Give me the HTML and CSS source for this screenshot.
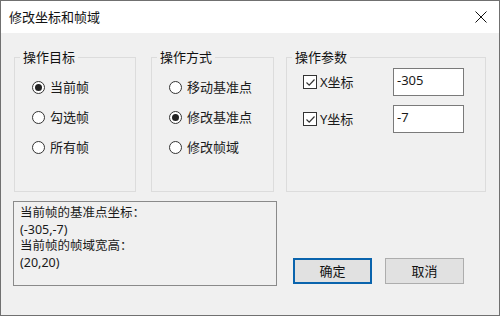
FILE: index.html
```html
<!DOCTYPE html>
<html lang="zh-CN">
<head>
<meta charset="utf-8">
<title>修改坐标和帧域</title>
<link rel="stylesheet" href="styles.css">
</head>
<body>
<div class="window">
  <div class="titlebar">
    <span class="title">修改坐标和帧域</span>
    <svg class="close" width="12" height="12" viewBox="0 0 12 12"><path d="M0.5 0.5 L11.5 11.5 M11.5 0.5 L0.5 11.5" stroke="#111" stroke-width="1" fill="none"/></svg>
  </div>
  <div class="content">
    <div class="groups">
      <fieldset class="group g1">
        <legend>操作目标</legend>
        <div class="rows">
          <div class="row"><span class="radio on"></span><span>当前帧</span></div>
          <div class="row"><span class="radio"></span><span>勾选帧</span></div>
          <div class="row"><span class="radio"></span><span>所有帧</span></div>
        </div>
      </fieldset>
      <fieldset class="group g2">
        <legend>操作方式</legend>
        <div class="rows">
          <div class="row"><span class="radio"></span><span>移动基准点</span></div>
          <div class="row"><span class="radio on"></span><span>修改基准点</span></div>
          <div class="row"><span class="radio"></span><span>修改帧域</span></div>
        </div>
      </fieldset>
      <fieldset class="group g3">
        <legend>操作参数</legend>
        <div class="params">
          <div class="param">
            <span class="check"><svg width="11" height="11" viewBox="0 0 11 11"><path d="M1.5 5.5 L4.2 8.2 L9.5 2.5" stroke="#333" stroke-width="1.2" fill="none"/></svg></span>
            <span class="plabel">X坐标</span>
            <div class="edit">-305</div>
          </div>
          <div class="param">
            <span class="check"><svg width="11" height="11" viewBox="0 0 11 11"><path d="M1.5 5.5 L4.2 8.2 L9.5 2.5" stroke="#333" stroke-width="1.2" fill="none"/></svg></span>
            <span class="plabel">Y坐标</span>
            <div class="edit">-7</div>
          </div>
        </div>
      </fieldset>
    </div>
    <div class="lower">
      <div class="info">
        <div class="line">当前帧的基准点坐标：</div>
        <div class="line">(-305,-7)</div>
        <div class="line">当前帧的帧域宽高：</div>
        <div class="line">(20,20)</div>
      </div>
      <div class="buttons">
        <button class="btn default">确定</button>
        <button class="btn">取消</button>
      </div>
    </div>
  </div>
</div>
</body>
</html>
```
FILE: styles.css
```css
* { box-sizing: border-box; }
html, body { margin: 0; padding: 0; }
body {
  width: 500px;
  height: 316px;
  font-family: "Noto Sans", "Noto Sans CJK SC", sans-serif;
  font-size: 13px;
  color: #1a1a1a;
  background: #f0f0f0;
}
.window {
  width: 500px;
  height: 316px;
  border: 1px solid #707070;
  display: flex;
  flex-direction: column;
  background: #f0f0f0;
}
.titlebar {
  height: 32px;
  background: #fff;
  display: flex;
  align-items: center;
  justify-content: space-between;
  padding: 0 12px 0 8px;
  flex-shrink: 0;
}
.title { font-size: 13px; line-height: 16px; color: #111; }
.close { display: block; }
.content {
  flex: 1;
  display: flex;
  flex-direction: column;
  padding: 16px 0 0 12px;
}
.groups {
  display: flex;
  padding-left: 1px;
}
.group {
  margin: 0;
  border: 1px solid #dcdcdc;
  padding: 0 0 0 5px;
  height: 143px;
  min-width: 0;
}
.group legend {
  padding: 0 3px;
  line-height: 16px;
  font-size: 13px;
  color: #111;
}
.g1 { width: 122px; margin-right: 15px; }
.g2 { width: 123px; margin-right: 12px; }
.g3 { width: 200px; }
.rows {
  display: flex;
  flex-direction: column;
  padding: 7px 0 0 12px;
}
.row {
  height: 30px;
  display: flex;
  align-items: center;
  gap: 5px;
  line-height: 16px;
}
.radio {
  width: 13px;
  height: 13px;
  border: 1px solid #333;
  border-radius: 50%;
  background: #fff;
  display: flex;
  align-items: center;
  justify-content: center;
  flex-shrink: 0;
}
.radio.on::after {
  content: "";
  width: 7px;
  height: 7px;
  border-radius: 50%;
  background: #222;
}
.params {
  display: flex;
  flex-direction: column;
  gap: 9px;
  padding: 3px 0 0 11px;
}
.param {
  display: flex;
  align-items: center;
  height: 28px;
}
.check {
  width: 14px;
  height: 14px;
  border: 1px solid #333;
  background: #fff;
  display: flex;
  align-items: center;
  justify-content: center;
  flex-shrink: 0;
}
.check svg { display: block; }
.plabel {
  width: 76px;
  padding-left: 3px;
  line-height: 16px;
}
.edit {
  width: 71px;
  height: 28px;
  border: 1px solid #7a7a7a;
  background: #fff;
  padding: 3px 0 0 3px;
  line-height: 16px;
  font-size: 13px;
}
.lower {
  display: flex;
  align-items: flex-end;
  margin-top: 9px;
}
.info {
  width: 264px;
  height: 85px;
  border: 1px solid #8a8a8a;
  padding: 3px 0 0 6px;
}
.line {
  height: 16.5px;
  line-height: 16.5px;
  font-size: 12.5px;
}
.buttons {
  display: flex;
  gap: 13px;
  margin-left: 16px;
  margin-bottom: 2px;
}
.btn {
  width: 79px;
  height: 26px;
  font-family: inherit;
  font-size: 13px;
  color: #111;
  background: #e1e1e1;
  border: 1px solid #adadad;
  padding: 0;
  line-height: 16px;
}
.btn.default {
  border: 2px solid #0a64ad;
}
```
